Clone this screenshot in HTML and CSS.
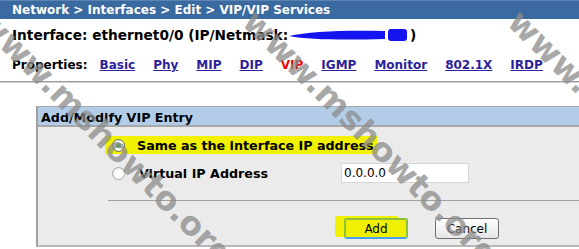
FILE: index.html
```html
<!DOCTYPE html>
<html>

<head>
    <title>VIP/VIP Services</title>
    <link rel="stylesheet" href="styles.css">
</head>

<body>
    <div class="crumb">Network &gt; Interfaces &gt; Edit &gt; VIP/VIP Services</div>

    <div class="info">
        <span>Interface: ethernet0/0 (IP/Netmask:</span>
        <svg class="redact" width="120" height="14" viewBox="0 0 120 14">
            <path d="M0 8 C20 3 58 2 96 3 L96 11 C58 12 20 12 0 8 Z" fill="#1414f0" />
            <rect x="99" y="1" width="19" height="12" rx="3" fill="#1414f0" />
        </svg>
        <span>)</span>
    </div>

    <div class="props">
        <span class="props-label">Properties:</span>
        <a href="#">Basic</a>
        <a href="#">Phy</a>
        <a href="#">MIP</a>
        <a href="#">DIP</a>
        <a href="#" class="current">VIP</a>
        <a href="#">IGMP</a>
        <a href="#">Monitor</a>
        <a href="#">802.1X</a>
        <a href="#">IRDP</a>
    </div>

    <div class="rule"></div>

    <div class="panel">
        <div class="panel-title">Add/Modify VIP Entry</div>
        <div class="panel-body">
            <div class="row">
                <span class="hl">
                    <span class="radio checked"></span>
                    <span class="label">Same as the interface IP address</span>
                </span>
            </div>
            <div class="row">
                <span class="radio"></span>
                <span class="label wide">Virtual IP Address</span>
                <input type="text" class="ip" value="0.0.0.0">
            </div>
            <div class="sep"></div>
            <div class="buttons">
                <button class="btn add">Add</button>
                <button class="btn">Cancel</button>
            </div>
        </div>
    </div>

    <div class="mark m1">www.mshowto.org</div>
    <div class="mark m2">www.mshowto.org</div>
    <div class="mark m3">www.mshowto.org</div>
</body>

</html>
```

FILE: styles.css
```css
body {
    margin: 0;
    font-family: "DejaVu Sans", Verdana, sans-serif;
    font-size: 12px;
    background-color: #fff;
    color: #000;
    width: 579px;
    height: 249px;
    overflow: hidden;
    position: relative;
}

.crumb {
    background-color: #3a6a9f;
    border-top: 1px solid #5c84b2;
    color: #fff;
    font-weight: bold;
    font-size: 12px;
    height: 18px;
    line-height: 18px;
    padding-left: 12px;
}

.info {
    display: flex;
    align-items: center;
    height: 14px;
    font-size: 13.7px;
    font-weight: bold;
    line-height: 14px;
    margin-top: 9px;
    padding-left: 12px;
}

.redact {
    margin-left: 1px;
    margin-right: 1px;
}

.props {
    display: flex;
    gap: 18px;
    height: 14px;
    font-weight: bold;
    line-height: 14px;
    margin-top: 16px;
    padding-left: 12px;
}

.props-label {
    margin-right: -6px;
}

.props a {
    color: #2d1f9a;
    text-decoration: underline;
}

.props a.current {
    color: #f00000;
    text-decoration: none;
}

.rule {
    margin-top: 9px;
    height: 1px;
    background-color: #9a9a9a;
    border-bottom: 1px solid #d4d4d4;
}

.panel {
    margin: 23px 0 0 36px;
    border-top: 1px solid #a8a8a8;
    border-left: 2px solid #a0a0a0;
    border-bottom: 2px solid #b8b8b8;
    background-color: #ebebeb;
}

.panel-title {
    background-color: #b3cde8;
    border-bottom: 2px solid #a8a8a8;
    font-size: 12.7px;
    font-weight: bold;
    line-height: 14px;
    padding: 4px 0 0 3px;
    height: 14px;
}

.panel-body {
    padding: 8px 0 6px 70px;
}

.row {
    display: flex;
    align-items: center;
    height: 20px;
    margin-bottom: 8px;
}

.hl {
    display: flex;
    align-items: center;
    background-color: #f2f200;
    height: 18px;
    padding: 0 3px 0 3px;
    margin-left: -3px;
}

.radio {
    width: 11px;
    height: 11px;
    border: 1px solid #a6a6a6;
    border-radius: 50%;
    background: radial-gradient(circle at 60% 60%, #ffffff 40%, #dcdcdc 100%);
    margin-left: 4px;
    position: relative;
}

.hl .radio {
    border-color: #5a6a5a;
}

.radio.checked::after {
    content: "";
    position: absolute;
    left: 3px;
    top: 3px;
    width: 5px;
    height: 5px;
    border-radius: 50%;
    background-color: #2aa02a;
}

.label {
    font-size: 12.7px;
    font-weight: bold;
    margin-left: 12px;
}

.label.wide {
    margin-left: 14px;
    width: 202px;
}

.ip {
    width: 122px;
    height: 16px;
    border: 1px solid #d6d6d6;
    padding: 1px 2px;
    font-family: "DejaVu Sans", Tahoma, sans-serif;
    font-size: 12px;
    margin: 0;
}

.sep {
    height: 1px;
    background-color: #a0a0a0;
    margin-top: 17px;
}

.buttons {
    display: flex;
    gap: 27px;
    margin-top: 17px;
    padding-left: 236px;
}

.btn {
    width: 64px;
    height: 21px;
    font-family: "DejaVu Sans", Tahoma, sans-serif;
    font-size: 12px;
    border: 1px solid #6e6e6e;
    border-radius: 3px;
    background: linear-gradient(#ffffff, #e6e6e6);
    padding: 0;
}

.btn.add {
    background: #eef000;
    border: 2px solid #8cbf3a;
    border-bottom-color: #4aa0e6;
    box-shadow: -9px -2px 0 0 #f2f200;
}

.mark {
    position: absolute;
    top: -4px;
    font-size: 33px;
    font-weight: bold;
    color: #8c8c8c;
    opacity: 0.75;
    transform-origin: 0 50%;
    transform: rotate(45deg);
    white-space: nowrap;
    pointer-events: none;
}

.m1 {
    left: -16px;
}

.m2 {
    left: 249px;
}

.m3 {
    left: 514px;
}
```
